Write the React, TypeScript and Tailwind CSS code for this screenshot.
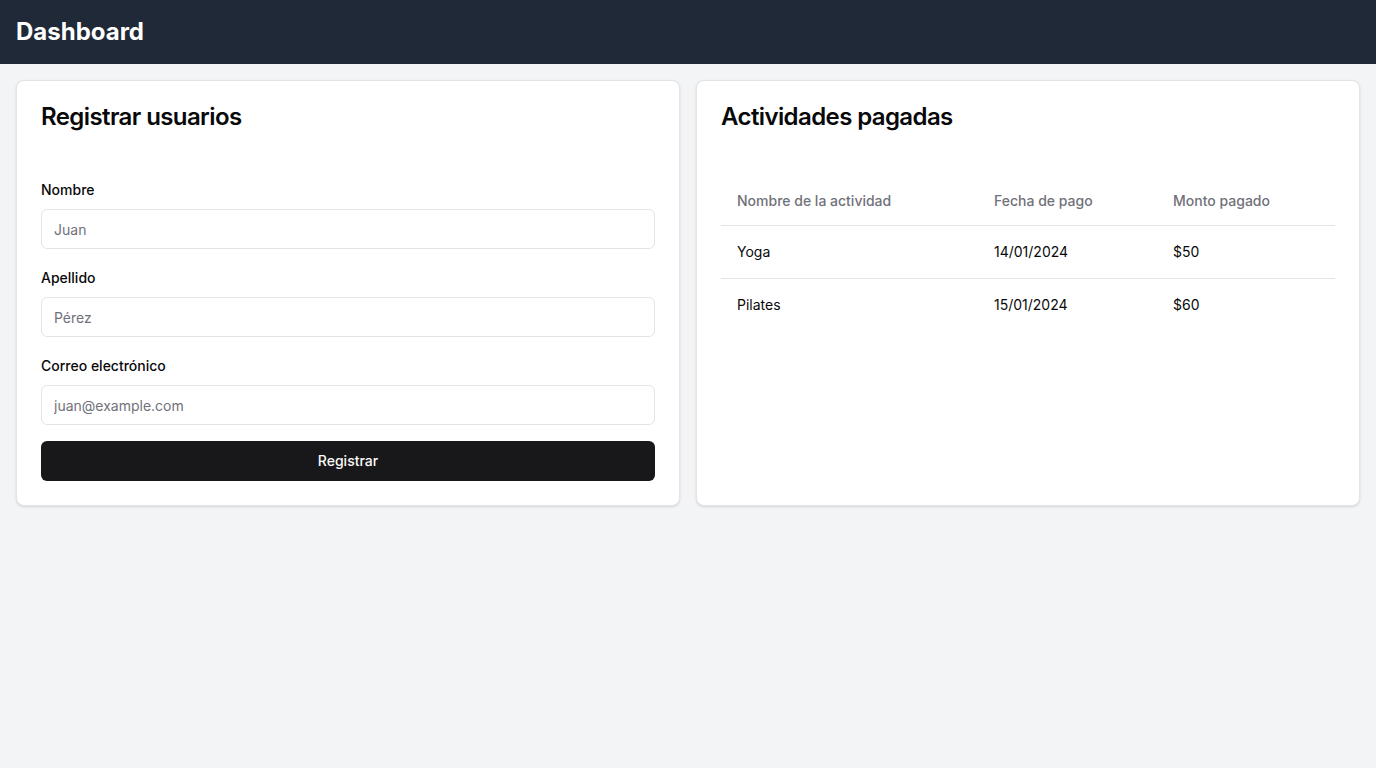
import React, { useState } from "react";

interface Payment {
  id: string;
  activity: string;
  date: string;
  amount: string;
}

const payments: Payment[] = [
  { id: "1", activity: "Yoga", date: "14/01/2024", amount: "$50" },
  { id: "2", activity: "Pilates", date: "15/01/2024", amount: "$60" },
];

function Field({
  label,
  placeholder,
  value,
  onChange,
  type = "text",
}: {
  label: string;
  placeholder: string;
  value: string;
  onChange: (v: string) => void;
  type?: string;
}) {
  return (
    <div>
      <label className="block text-sm leading-5 font-medium text-[#09090b]">{label}</label>
      <input
        type={type}
        value={value}
        onChange={(e) => onChange(e.target.value)}
        placeholder={placeholder}
        className="mt-[9px] block h-10 w-full rounded-md border border-[#e4e4e7] bg-white px-3 text-sm text-[#09090b] placeholder:text-[#71717a] outline-none"
      />
    </div>
  );
}

export default function App() {
  const [nombre, setNombre] = useState("");
  const [apellido, setApellido] = useState("");
  const [correo, setCorreo] = useState("");

  return (
    <div className="min-h-screen w-full bg-[#f3f4f6] font-['Inter',sans-serif]">
      {/* Header */}
      <header className="flex h-16 items-center bg-[#1f2937] px-4">
        <h1 className="text-2xl font-bold text-white">Dashboard</h1>
      </header>

      <main className="grid grid-cols-2 gap-4 p-4">
        {/* Register form */}
        <div className="rounded-lg border border-[#e4e4e7] bg-white p-6 shadow-sm">
          <h2 className="text-2xl leading-none font-semibold tracking-tight text-[#09090b]">
            Registrar usuarios
          </h2>
          <form className="mt-[51px]" onSubmit={(e) => e.preventDefault()}>
            <Field label="Nombre" placeholder="Juan" value={nombre} onChange={setNombre} />
            <div className="mt-[19px]">
              <Field label="Apellido" placeholder="Pérez" value={apellido} onChange={setApellido} />
            </div>
            <div className="mt-[19px]">
              <Field
                label="Correo electrónico"
                placeholder="juan@example.com"
                type="email"
                value={correo}
                onChange={setCorreo}
              />
            </div>
            <button
              type="submit"
              className="mt-4 h-10 w-full rounded-md bg-[#18181b] text-sm font-medium text-[#fafafa]"
            >
              Registrar
            </button>
          </form>
        </div>

        {/* Paid activities */}
        <div className="rounded-lg border border-[#e4e4e7] bg-white p-6 shadow-sm">
          <h2 className="text-2xl leading-none font-semibold tracking-tight text-[#09090b]">
            Actividades pagadas
          </h2>
          <table className="mt-12 w-full border-collapse text-sm">
            <thead>
              <tr className="border-b border-[#e4e4e7]">
                <th className="h-12 w-[257px] px-4 text-left font-medium text-[#71717a]">
                  Nombre de la actividad
                </th>
                <th className="h-12 w-[179px] px-4 text-left font-medium text-[#71717a]">Fecha de pago</th>
                <th className="h-12 px-4 text-left font-medium text-[#71717a]">Monto pagado</th>
              </tr>
            </thead>
            <tbody>
              {payments.map((p, i) => (
                <tr
                  key={p.id}
                  className={i < payments.length - 1 ? "border-b border-[#e4e4e7]" : ""}
                >
                  <td className="p-4 leading-5 text-[#09090b]">{p.activity}</td>
                  <td className="p-4 leading-5 text-[#09090b]">{p.date}</td>
                  <td className="p-4 leading-5 text-[#09090b]">{p.amount}</td>
                </tr>
              ))}
            </tbody>
          </table>
        </div>
      </main>
    </div>
  );
}
